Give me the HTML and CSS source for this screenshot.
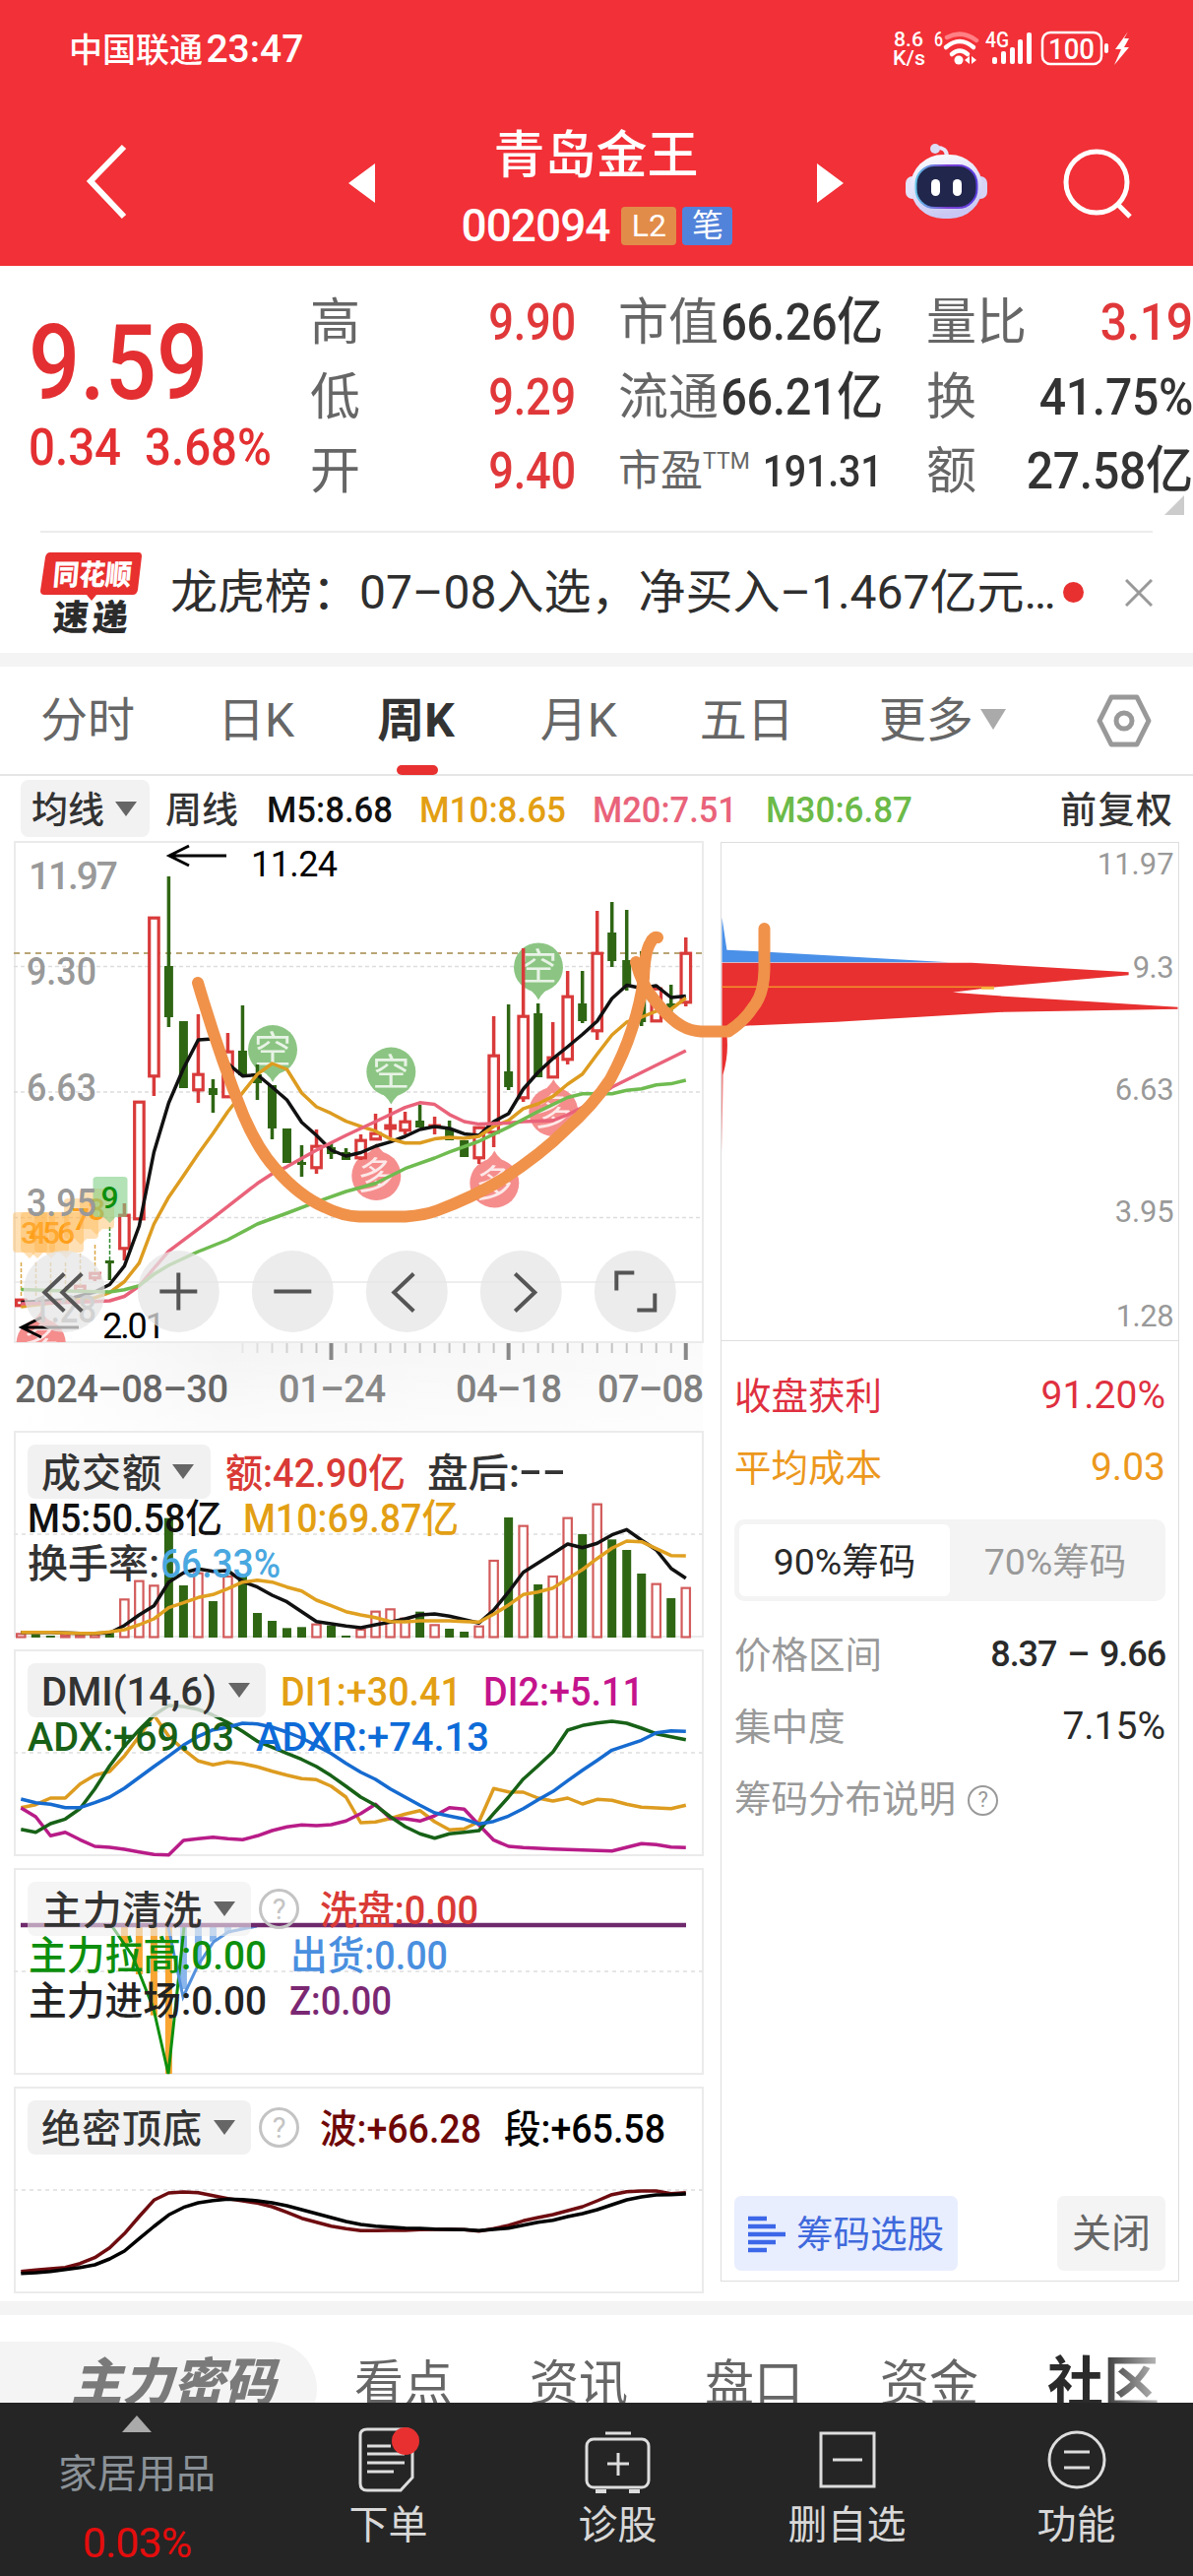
FILE: index.html
```html
<!DOCTYPE html>
<html lang="zh-CN">
<head>
    <meta charset="UTF-8">
    <title>青岛金王 002094</title>
    <link rel="stylesheet" href="styles.css">
</head>
<body>
    <header class="header">
        <div class="status-bar">
            <div class="carrier">中国联通 <span class="clock">23:47</span></div>
            <svg class="status-icons" viewBox="904 28 250 44" width="250" height="44">
                <g class="status-text">
                    <text x="908" y="47" font-size="21" textLength="30" lengthAdjust="spacingAndGlyphs">8.6</text>
                    <text x="907" y="66" font-size="21" textLength="33" lengthAdjust="spacingAndGlyphs">K/s</text>
                    <text x="949" y="47" font-size="20" textLength="9" lengthAdjust="spacingAndGlyphs">6</text>
                    <text x="1001" y="48" font-size="22" textLength="24" lengthAdjust="spacingAndGlyphs">4G</text>
                    <text x="1065" y="60" font-size="30" textLength="47" lengthAdjust="spacingAndGlyphs">100</text>
                </g>
                <g fill="none" stroke="#fff" stroke-width="4.5" stroke-linecap="round">
                    <path d="M962 38q15-8 30 3" stroke="#ff8085"/>
                    <path d="M961 48q14-12 28 0M967 55q8-7 16 0"/>
                </g>
                <circle cx="974" cy="61" r="4.500" fill="#fff"/>
                <path d="M985 57v8l-5-4zM987 57v8l5-4z" fill="#fff"/>
                <g fill="#fff">
                    <rect x="1008" y="58" width="5" height="7" rx="2"/><rect x="1017" y="52" width="5" height="13" rx="2"/>
                    <rect x="1026" y="48" width="5" height="17" rx="2"/><rect x="1034" y="40" width="5" height="25" rx="2"/>
                    <rect x="1043" y="33" width="5" height="32" rx="2"/><rect x="1122" y="44" width="4" height="10" rx="2"/>
                    <path d="M1146 32l-13 18h6l-7 16 15-18h-5l5-9h-5z"/>
                </g>
                <rect x="1059" y="33" width="60" height="32" rx="8" fill="none" stroke="#fff" stroke-width="2.500"/>
            </svg>
        </div>
        <div class="nav-bar">
            <svg class="back" viewBox="0 0 44 78" width="44" height="78"><path d="M40 3L6 38l34 36" fill="none" stroke="#fff" stroke-width="6"/></svg>
            <svg class="prev" viewBox="0 0 27 40" width="27" height="40"><path d="M27 0v40L0 20z" fill="#fff"/></svg>
            <div class="stock">
                <div class="stock-name">青岛金王</div>
                <div class="stock-code"><span>002094</span><i class="tag tag-l2">L2</i><i class="tag tag-pen">笔</i></div>
            </div>
            <svg class="next" viewBox="0 0 27 40" width="27" height="40"><path d="M0 0v40l27-20z" fill="#fff"/></svg>
            <svg class="robot" viewBox="918 144 88 80" width="88" height="80">
                <defs>
                    <linearGradient id="shell" x2="0.300" y2="1"><stop offset="0" stop-color="#fff"/><stop offset="1" stop-color="#c9c8f4"/></linearGradient>
                    <linearGradient id="rim"><stop offset="0" stop-color="#62c4e8"/><stop offset="0.500" stop-color="#7b3fd4"/><stop offset="1" stop-color="#5a3fe0"/></linearGradient>
                </defs>
                <path d="M950 150q12-1 12 9" fill="none" stroke="#e9e6fa" stroke-width="4"/>
                <circle cx="950" cy="151" r="5" fill="#dcdcf5"/>
                <rect x="920" y="179" width="14" height="23" rx="7" fill="#e3e2fa"/>
                <rect x="989" y="179" width="14" height="23" rx="7" fill="#d6d3f6"/>
                <rect x="925" y="157" width="73" height="65" rx="33" fill="url(#shell)"/>
                <rect x="930.500" y="168" width="62" height="43" rx="19" fill="#20264c" stroke="url(#rim)" stroke-width="2"/>
                <rect x="946" y="182" width="9" height="17" rx="4.500" fill="#fff"/>
                <rect x="968" y="182" width="9" height="17" rx="4.500" fill="#fff"/>
            </svg>
            <svg class="search" viewBox="0 0 72 72" width="72" height="72"><g fill="none" stroke="#fff" stroke-width="5"><circle cx="34" cy="34" r="31"/><path d="M55 56l13 13"/></g></svg>
        </div>
    </header>

    <section class="quote">
        <div class="price">
            <div class="price-now"><span class="num">9.59</span></div>
            <div class="price-change"><span class="num">0.34</span><span class="num">3.68%</span></div>
        </div>
        <dl class="stats stats-range">
            <div><dt>高</dt><dd class="up"><span class="num">9.90</span></dd></div>
            <div><dt>低</dt><dd class="up"><span class="num">9.29</span></dd></div>
            <div><dt>开</dt><dd class="up"><span class="num">9.40</span></dd></div>
        </dl>
        <dl class="stats stats-cap">
            <div><dt>市值</dt><dd><span class="num">66.26亿</span></dd></div>
            <div><dt>流通</dt><dd><span class="num">66.21亿</span></dd></div>
            <div class="pe"><dt>市盈<sup>TTM</sup></dt><dd><span class="num">191.31</span></dd></div>
        </dl>
        <dl class="stats stats-vol">
            <div><dt>量比</dt><dd class="up"><span class="num">3.19</span></dd></div>
            <div><dt>换</dt><dd><span class="num">41.75%</span></dd></div>
            <div><dt>额</dt><dd><span class="num">27.58亿</span></dd></div>
        </dl>
        <i class="expand"></i>
    </section>

    <section class="news">
        <svg class="news-logo" viewBox="41 558 104 84" width="104" height="84">
            <path d="M51 559h90q3 0 3 4l-4 34q-1 5-5 5H98l-5 6-5-6H45q-4 0-4-4l5-34q1-5 5-5z" fill="#e8302f"/>
            <text class="logo-text" transform="translate(53 592) skewX(-5)" font-size="29" fill="#fff" textLength="80" lengthAdjust="spacingAndGlyphs">同花顺</text>
            <text class="logo-text" transform="translate(53 638) skewX(-5)" font-size="36" fill="#2b2b2b" textLength="76">速递</text>
        </svg>
        <p class="news-text">龙虎榜：07–08入选，净买入–1.467亿元…</p>
        <i class="news-dot"></i>
        <svg class="close" viewBox="0 0 28 28" width="28" height="28"><path d="M1 1l26 26M27 1L1 27" stroke="#999" stroke-width="3"/></svg>
    </section>

    <nav class="periods">
        <a>分时</a><a>日K</a><a class="active">周K</a><a>月K</a><a>五日</a><a class="more">更多</a>
        <svg class="settings" viewBox="0 0 56 54" width="56" height="54"><g fill="none" stroke="#999" stroke-width="5" stroke-linejoin="round"><path d="M15 3h26l12 24-12 24H15L3 27z"/><circle cx="28" cy="27" r="8"/></g></svg>
    </nav>

    <div class="ma-row">
        <svg viewBox="0 788 1212 67" width="1212" height="67">
            <rect x="21" y="792" width="131" height="58" rx="8" fill="#f2f2f2"/>
            <g font-size="37" class="label">
                <text x="32" y="836" fill="#333" textLength="74">均线</text>
                <path d="M117 814h22l-11 15z" fill="#666"/>
                <text x="168" y="836" fill="#333" textLength="74">周线</text>
                <text x="271" y="835" fill="#111" textLength="128" lengthAdjust="spacingAndGlyphs">M5:8.68</text>
                <text x="426" y="835" fill="#e39f14" textLength="149" lengthAdjust="spacingAndGlyphs">M10:8.65</text>
                <text x="602" y="835" fill="#e9637a" textLength="147" lengthAdjust="spacingAndGlyphs">M20:7.51</text>
                <text x="778" y="835" fill="#6cba48" textLength="149" lengthAdjust="spacingAndGlyphs">M30:6.87</text>
                <text x="1077" y="836" fill="#333" textLength="114">前复权</text>
            </g>
        </svg>
    </div>

    <main class="charts">
        <div class="chart-col">
            <svg id="kline" viewBox="0 854 728 599" width="728" height="599">
                <defs>
                    <linearGradient id="axisShade"><stop offset="0" stop-color="#fff"/><stop offset="0.300" stop-color="#f4f4f4"/><stop offset="1" stop-color="#fafafa"/></linearGradient>
                    <linearGradient id="axisFade" x2="0" y2="1"><stop offset="0" stop-color="#fff" stop-opacity="0"/><stop offset="1" stop-color="#fff" stop-opacity="0.700"/></linearGradient>
                    <clipPath id="klineClip"><rect x="14" y="855" width="701" height="508"/></clipPath>
                </defs>
                <rect x="15" y="1364" width="699" height="90" fill="url(#axisShade)"/>
                <rect x="15" y="1364" width="699" height="90" fill="url(#axisFade)"/>
                <rect x="15" y="855" width="699" height="508" fill="#fff" stroke="#ebebeb" stroke-width="2"/>
                <path d="M14 981.500h700M14 1109h700M14 1236.500h700" stroke="#ddd" stroke-width="1.500" stroke-dasharray="4 3"/>
                <path d="M14 1302h700" stroke="#e8e8e8" stroke-width="1.500"/>
                <path d="M14 968h700" stroke="#b9a575" stroke-width="2" stroke-dasharray="6 5"/>
                <g id="signals" clip-path="url(#klineClip)"></g>
                <g id="candles"></g>
                <g id="tdTags"></g>
                <g id="maLines"></g>
                <g id="ticks"></g>
                <g class="label" font-size="39" fill="#999">
                    <text x="29" y="902.500" textLength="91">11.97</text>
                    <text x="27" y="1000" textLength="71" lengthAdjust="spacingAndGlyphs">9.30</text>
                    <text x="27" y="1118" textLength="71" lengthAdjust="spacingAndGlyphs">6.63</text>
                    <text x="27" y="1235" textLength="71" lengthAdjust="spacingAndGlyphs">3.95</text>
                    <text x="33" y="1343" textLength="65" lengthAdjust="spacingAndGlyphs">1.28</text>
                </g>
                <g font-size="36" class="mark">
                    <text x="255" y="889.500" textLength="88">11.24</text>
                    <text x="104" y="1358.500" textLength="64">2.01</text>
                    <path d="M230 869h-57M192 859l-20 10 20 10" fill="none" stroke="#000" stroke-width="3"/>
                    <path d="M80 1348H23M42 1338l-20 10 20 10" fill="none" stroke="#000" stroke-width="3"/>
                </g>
                <g id="controls"></g>
                <g font-size="38" class="label">
                    <text x="15" y="1423.500" fill="#666" textLength="217">2024–08–30</text>
                    <text x="283" y="1423.500" fill="#888" textLength="109">01–24</text>
                    <text x="463" y="1423.500" fill="#808080" textLength="108">04–18</text>
                    <text x="607" y="1423.500" fill="#808080" textLength="108">07–08</text>
                </g>
            </svg>

            <svg id="volume" viewBox="0 1453 728 222" width="728" height="222">
                <rect x="15" y="1454" width="699" height="208" class="frame"/>
                <path d="M14 1558h700" class="mid"/>
                <g id="volBars"></g><g id="volLines"></g>
                <rect x="28" y="1467" width="186" height="55" rx="8" class="chip"/>
                <path d="M175 1487h22l-11 15z" fill="#666"/>
                <g font-size="40" class="label">
                    <text x="42" y="1510" fill="#333" textLength="122">成交额</text>
                    <text x="229" y="1510" fill="#d93a36" textLength="183" lengthAdjust="spacingAndGlyphs">额:42.90亿</text>
                    <text x="434" y="1510" fill="#333" textLength="94" lengthAdjust="spacingAndGlyphs">盘后:</text>
                    <text x="527" y="1508" fill="#333" textLength="48" lengthAdjust="spacingAndGlyphs">--</text>
                    <text x="28" y="1556" fill="#111" textLength="198" lengthAdjust="spacingAndGlyphs">M5:50.58亿</text>
                    <text x="247" y="1556" fill="#e39f14" textLength="219" lengthAdjust="spacingAndGlyphs">M10:69.87亿</text>
                    <text x="28" y="1602" fill="#333" textLength="134" lengthAdjust="spacingAndGlyphs">换手率:</text>
                    <text x="163" y="1602" fill="#4aa8e0" textLength="122" lengthAdjust="spacingAndGlyphs">66.33%</text>
                </g>
            </svg>

            <svg id="dmi" viewBox="0 1675 728 221" width="728" height="221">
                <rect x="15" y="1676" width="699" height="208" class="frame"/>
                <path d="M14 1780h700" class="mid"/>
                <g id="dmiLines"></g>
                <rect x="28" y="1689" width="242" height="55" rx="8" class="chip"/>
                <path d="M232 1709h22l-11 15z" fill="#666"/>
                <g font-size="40" class="label">
                    <text x="42" y="1732" fill="#333" textLength="178" lengthAdjust="spacingAndGlyphs">DMI(14,6)</text>
                    <text x="285" y="1732" fill="#e39f14" textLength="184" lengthAdjust="spacingAndGlyphs">DI1:+30.41</text>
                    <text x="491" y="1732" fill="#c4148c" textLength="163" lengthAdjust="spacingAndGlyphs">DI2:+5.11</text>
                    <text x="28" y="1778" fill="#176117" textLength="210" lengthAdjust="spacingAndGlyphs">ADX:+69.03</text>
                    <text x="260" y="1778" fill="#0d6bd8" textLength="237" lengthAdjust="spacingAndGlyphs">ADXR:+74.13</text>
                </g>
            </svg>

            <svg id="washing" viewBox="0 1896 728 223" width="728" height="223">
                <rect x="15" y="1898" width="699" height="208" class="frame"/>
                <path d="M14 2002h700" class="mid"/>
                <g id="washBars"></g>
                <path d="M21 1955h92l22 32 21 53 15 66 16-149" fill="none" stroke="#0d8f0d" stroke-width="3"/>
                <path d="M171 1957l15 71 15-32 16-24 15-10 29-6" fill="none" stroke="#5592dd" stroke-width="3"/>
                <path d="M21 1955h676" stroke="#6f2a6c" stroke-width="4.500"/>
                <rect x="28" y="1911" width="227" height="55" rx="8" class="chip chip-thin"/>
                <path d="M217 1931h22l-11 15z" fill="#666"/>
                <circle cx="283.500" cy="1938.500" r="19" class="help"/>
                <text x="283.500" y="1949" font-size="29" class="help-mark">?</text>
                <g font-size="40" class="label">
                    <text x="43" y="1954" fill="#333" textLength="162">主力清洗</text>
                    <text x="325" y="1954" fill="#d93a36" textLength="161" lengthAdjust="spacingAndGlyphs">洗盘:0.00</text>
                    <text x="29" y="2000" fill="#0d8f0d" textLength="242" lengthAdjust="spacingAndGlyphs">主力拉高:0.00</text>
                    <text x="295" y="2000" fill="#4a8fdf" textLength="160" lengthAdjust="spacingAndGlyphs">出货:0.00</text>
                    <text x="29" y="2046" fill="#222" textLength="242" lengthAdjust="spacingAndGlyphs">主力进场:0.00</text>
                    <text x="294" y="2046" fill="#7b2873" textLength="104" lengthAdjust="spacingAndGlyphs">Z:0.00</text>
                </g>
            </svg>

            <svg id="topBottom" viewBox="0 2119 728 218" width="728" height="218">
                <rect x="15" y="2120" width="699" height="208" class="frame"/>
                <path d="M14 2224h700" class="mid"/>
                <g id="tbLines"></g>
                <rect x="28" y="2133" width="227" height="55" rx="8" class="chip"/>
                <path d="M217 2153h22l-11 15z" fill="#666"/>
                <circle cx="283.500" cy="2160.500" r="19" class="help"/>
                <text x="283.500" y="2171" font-size="29" class="help-mark">?</text>
                <g font-size="40" class="label">
                    <text x="42" y="2176" fill="#333" textLength="163">绝密顶底</text>
                    <text x="325" y="2176" fill="#6e0808" textLength="164" lengthAdjust="spacingAndGlyphs">波:+66.28</text>
                    <text x="512" y="2176" fill="#000" textLength="164" lengthAdjust="spacingAndGlyphs">段:+65.58</text>
                </g>
            </svg>
        </div>

        <aside class="chips">
            <svg class="chips-chart" viewBox="733 856 464 506" width="464" height="506">
                <path d="M733 932l5 33 22 1 204 11.500H733z" fill="#4a90e8"/>
                <path d="M733 978h254l160 9.500v3L1008 1003l-40 5 52 4 177 11v2l-177 3-170 10-93 4-19 10q2 20-4 40l-1 80z" fill="#e83030"/>
                <path d="M733 1002.500h264" stroke="#f3922a" stroke-width="1.500"/>
                <path d="M997 1003.500h13" stroke="#f5b13a" stroke-width="3"/>
                <g class="axis" font-size="31">
                    <text x="1193" y="888" textLength="78">11.97</text>
                    <text x="1193" y="993" textLength="42">9.3</text>
                    <text x="1193" y="1117.500" textLength="60">6.63</text>
                    <text x="1193" y="1241.500" textLength="60">3.95</text>
                    <text x="1193" y="1347.500" textLength="59">1.28</text>
                </g>
            </svg>
            <div class="chips-info">
                <div class="info-row profit"><span>收盘获利</span><b>91.20%</b></div>
                <div class="info-row cost"><span>平均成本</span><b>9.03</b></div>
                <div class="segment"><span class="on">90%筹码</span><span>70%筹码</span></div>
                <div class="info-row"><span>价格区间</span><b class="range">8.37 – 9.66</b></div>
                <div class="info-row"><span>集中度</span><b>7.15%</b></div>
                <div class="info-row"><span>筹码分布说明 <i class="q">?</i></span></div>
                <div class="chips-actions">
                    <span class="pick"><svg viewBox="0 0 38 38" width="38" height="38"><path d="M0 3h19M0 11h28M0 19h38M0 27h28M0 35h19" stroke="#3c67e8" stroke-width="4.500"/></svg>筹码选股</span>
                    <span class="shut">关闭</span>
                </div>
            </div>
        </aside>

        <svg class="drawing" viewBox="190 930 600 320" width="600" height="320">
            <path d="M201 998C214 1042 226 1080 247 1132C258 1158 268 1174 280 1187Q303 1214 330 1226Q348 1235 365 1235.500H412Q432 1234 445 1229Q480 1216 510 1198Q550 1172 575 1147Q603 1122 620 1096Q634 1070 642 1045Q651 1018 654 993Q655 966 661 957Q664 951 668 952"/>
            <path d="M646 977Q652 1000 663 1013Q680 1035 693 1042Q702 1047 712 1047.500H740Q756 1037 765 1023Q776 1010 776.500 985V943"/>
        </svg>
    </main>

    <nav class="sections">
        <a class="pill">主力密码</a><a>看点</a><a>资讯</a><a>盘口</a><a>资金</a><a class="current">社区</a>
    </nav>

    <footer class="toolbar">
        <div class="sector"><i class="caret"></i><span class="sector-name">家居用品</span><span class="sector-rate">0.03%</span></div>
        <div class="tool">
            <svg viewBox="0 0 64 68" width="64" height="68"><g fill="none" stroke="#ddd" stroke-width="3"><path d="M10 3h40q6 0 6 6v43L44 65H10q-7 0-7-7V9q0-6 7-6z"/><path d="M10 20h24M10 28h38M10 37h38M10 46h27"/></g><circle cx="49" cy="15" r="14" fill="#e83030"/></svg>
            <span>下单</span>
        </div>
        <div class="tool">
            <svg viewBox="0 0 68 68" width="68" height="68"><g fill="none" stroke="#ddd" stroke-width="3"><rect x="2" y="13" width="63" height="49" rx="7"/><path d="M21 7h26M23 38h22M34 27v23"/><path d="M11 66h11M45 66h11" stroke-width="4"/></g></svg>
            <span>诊股</span>
        </div>
        <div class="tool">
            <svg viewBox="0 0 60 68" width="60" height="68"><path d="M3 7h54v54H3zM15 34h30" fill="none" stroke="#ddd" stroke-width="3"/></svg>
            <span>删自选</span>
        </div>
        <div class="tool">
            <svg viewBox="0 0 60 68" width="60" height="68"><g fill="none" stroke="#ddd" stroke-width="3"><circle cx="30" cy="34" r="28"/><path d="M17 26h26M17 42h26"/></g></svg>
            <span>功能</span>
        </div>
    </footer>
    <script src="charts.js"></script>
</body>
</html>
```
FILE: styles.css
```css
* {
    box-sizing: border-box;
}

body {
    margin: 0;
    width: 1212px;
    height: 2616px;
    overflow: hidden;
    background-color: #fff;
    color: #333;
    font-family: Roboto, "Noto Sans CJK SC", sans-serif;
}

svg {
    display: block;
    flex: none;
}

i {
    font-style: normal;
}

.num {
    display: inline-block;
    transform: scaleX(0.87);
    transform-origin: right;
}

/* header */
.header {
    height: 270px;
    background-color: #f23037;
    color: #fff;
}

.status-bar {
    display: flex;
    justify-content: space-between;
    align-items: center;
    height: 100px;
    padding: 0 58px 0 70px;
}

.carrier {
    font-size: 34px;
    font-weight: 500;
    line-height: 40px;
    white-space: nowrap;
}

.clock {
    font-size: 39px;
    margin-left: -5px;
}

.status-text {
    fill: #fff;
    font-weight: 500;
}

.nav-bar {
    display: flex;
    height: 170px;
    padding-left: 86px;
}

.back {
    margin-top: 46px;
}

.prev {
    margin: 66px 0 0 224px;
}

.next {
    margin-top: 66px;
}

.stock {
    width: 449px;
    text-align: center;
}

.stock-name {
    font-size: 52px;
    font-weight: 500;
    line-height: 70px;
    margin-top: 24px;
}

.stock-code {
    display: flex;
    justify-content: center;
    align-items: center;
    gap: 6px;
    font-size: 46px;
    font-weight: 500;
    line-height: 70px;
    padding-left: 2px;
}

.stock-code span {
    letter-spacing: -1px;
    margin-right: 6px;
}

.tag {
    height: 39px;
    line-height: 38px;
    border-radius: 4px;
    text-align: center;
    font-size: 32px;
    font-weight: 400;
}

.tag-l2 {
    width: 56px;
    background-color: #e28c49;
}

.tag-pen {
    width: 51px;
    background-color: #5283da;
}

.robot {
    margin: 44px 0 0 61px;
}

.search {
    margin: 51px 0 0 74px;
}

/* quote */
.quote {
    position: relative;
    display: flex;
    height: 269px;
    padding-top: 20px;
}

.price {
    width: 315px;
    padding-left: 29px;
    color: #e32f31;
    white-space: nowrap;
}

.price .num {
    transform-origin: left;
}

.price-now {
    height: 134px;
    line-height: 160px;
    font-size: 105px;
    font-weight: 500;
}

.price-now .num {
    transform: scaleX(0.875);
}

.price-change {
    display: flex;
    gap: 17px;
    font-size: 51px;
    font-weight: 500;
    line-height: 62px;
}

.price-change .num {
    transform: scaleX(0.93);
}

.stats {
    margin: 0;
}

.stats div {
    display: flex;
    justify-content: space-between;
    align-items: center;
    height: 75.500px;
    line-height: 75px;
    font-size: 51px;
    white-space: nowrap;
}

.stats dt {
    color: #666;
}

.stats dd {
    margin: 0;
    font-size: 52px;
    font-weight: 500;
    letter-spacing: -0.3px;
}

.stats .up {
    color: #e0383a;
}

.stats-range {
    width: 270px;
}

.stats-cap {
    width: 270px;
    margin-left: 43px;
}

.stats-cap div {
    padding-right: 1px;
}

/* the squeezed number may reach over its own unscaled box */
.stats-cap dd {
    margin-left: -30px;
}

.stats-cap .num {
    transform: scaleX(0.9);
}

.stats-vol {
    width: 271px;
    margin-left: 43px;
}

.stats-vol .num {
    transform: scaleX(0.925);
}

.stats .pe dt {
    font-size: 43px;
}

.stats .pe dd {
    font-size: 45px;
}

.stats .pe .num {
    transform: scaleX(0.88);
}

.pe sup {
    font-size: 23px;
    vertical-align: 17px;
    line-height: 0;
}

.expand {
    position: absolute;
    right: 9px;
    top: 233px;
    border-left: 20px solid transparent;
    border-bottom: 20px solid #ccc;
}

/* news */
.news {
    display: flex;
    align-items: center;
    height: 124px;
    margin: 0 41px;
    border-top: 2px solid #ececec;
}

.logo-text {
    font-weight: 900;
}

.news-text {
    width: 893px;
    margin: 0 0 0 28px;
    font-size: 48px;
    line-height: 60px;
    white-space: nowrap;
    color: #2e2e2e;
}

.news-dot {
    width: 21px;
    height: 21px;
    margin-left: 14px;
    margin-top: -2px;
    border-radius: 50%;
    background-color: #e83030;
}

.close {
    margin-left: auto;
}

/* period tabs */
.periods {
    display: flex;
    align-items: center;
    height: 125px;
    padding-left: 41px;
    border-top: 14px solid #f4f4f4;
    border-bottom: 2px solid #e5e5e5;
    font-size: 48px;
    color: #666;
}

.periods a {
    position: relative;
    line-height: 110px;
    margin-right: 84px;
    white-space: nowrap;
}

.periods .active {
    color: #333;
    font-weight: 700;
    margin-right: 87px;
}

.periods .active::after {
    content: "";
    position: absolute;
    left: 20px;
    bottom: 0;
    width: 42px;
    height: 10px;
    border-radius: 5px;
    background-color: #e83030;
}

.periods .more {
    margin-left: 2px;
    margin-right: 0;
}

.periods .more::after {
    content: "";
    display: inline-block;
    margin-left: 7px;
    vertical-align: 7px;
    border: 13px solid transparent;
    border-top: 21px solid #aaa;
    border-bottom: 0;
}

.settings {
    margin-left: auto;
    margin-right: 42px;
}

/* charts */
.charts {
    position: relative;
    display: flex;
    height: 1483px;
    margin-top: -1px;
}

.label {
    font-weight: 500;
}

.axis {
    fill: #999;
    text-anchor: end;
}

.mark {
    fill: #000;
}

.frame {
    fill: #fff;
    stroke: #ebebeb;
    stroke-width: 2;
}

.mid {
    stroke: #e6e6e6;
    stroke-width: 2;
    stroke-dasharray: 4 4;
}

.chip {
    fill: rgba(238, 238, 238, 0.8);
}

.chip-thin {
    fill: rgba(238, 238, 238, 0.6);
}

.help {
    fill: none;
    stroke: #c4c4c4;
    stroke-width: 3;
}

.help-mark {
    fill: #c4c4c4;
    text-anchor: middle;
}

.line {
    fill: none;
    stroke-width: 3.5;
    stroke-linejoin: round;
}

.signal {
    fill: #fff;
    font-size: 38px;
    text-anchor: middle;
    opacity: 0.8;
}

.drawing {
    position: absolute;
    left: 190px;
    top: 76px;
    fill: none;
    stroke: #f0924a;
    stroke-width: 12;
    stroke-linecap: round;
    stroke-linejoin: round;
}

.chips {
    width: 466px;
    height: 1462px;
    margin: 1px 0 0 4px;
    border: 1px solid #dedede;
}

.chips-chart {
    border-bottom: 1px solid #dedede;
}

.chips-info {
    padding: 19px 13px 0;
    font-size: 37.500px;
    color: #999;
}

.info-row {
    display: flex;
    justify-content: space-between;
    align-items: center;
    height: 73px;
    line-height: 73px;
}

.info-row span, .pick, .shut {
    padding-top: 2px;
}

.info-row b {
    font-weight: 400;
    color: #2a2a2a;
    font-size: 39px;
}

.info-row .range {
    font-weight: 500;
    font-size: 36px;
    word-spacing: 3px;
    letter-spacing: -1.1px;
}

.profit, .info-row.profit b {
    color: #df3040;
}

.cost, .info-row.cost b {
    color: #ec981d;
}

.segment {
    display: flex;
    height: 83px;
    margin: 16px 0 18px;
    padding: 5px;
    border-radius: 10px;
    background-color: #f4f4f4;
}

.segment span {
    flex: 1;
    line-height: 76px;
    text-align: center;
    border-radius: 6px;
}

.segment .on {
    background-color: #fff;
    color: #2a2a2a;
}

.q {
    display: inline-block;
    width: 31px;
    height: 31px;
    margin-left: 3px;
    border: 2.5px solid #999;
    border-radius: 50%;
    font-size: 22px;
    line-height: 26px;
    text-align: center;
    vertical-align: 5px;
}

.chips-actions {
    display: flex;
    justify-content: space-between;
    margin-top: 367px;
}

.pick, .shut {
    display: flex;
    align-items: center;
    justify-content: center;
    height: 76px;
    line-height: 74px;
    border-radius: 7px;
}

.pick {
    width: 227px;
    gap: 11px;
    background-color: #e8eefe;
    color: #3f69dc;
}

.shut {
    width: 110px;
    font-size: 40px;
    background-color: #f4f4f4;
    color: #666;
}

/* section tabs */
.sections {
    display: flex;
    height: 103px;
    padding-top: 27px;
    border-top: 14px solid #f4f4f4;
    overflow: hidden;
    font-size: 50px;
    line-height: 86px;
    color: #666;
}

.sections a {
    flex: none;
    margin-right: 78px;
}

.sections .pill {
    width: 322px;
    height: 96px;
    margin-right: 38px;
    padding-left: 72px;
    border-radius: 0 48px 48px 0;
    background-color: #f4f4f4;
    color: #7a7a7a;
    font-size: 52px;
    line-height: 86px;
    font-weight: 900;
    font-style: italic;
}

.sections .current {
    margin: 0 0 0 -8px;
    font-size: 57px;
    font-weight: 700;
    background: linear-gradient(90deg, #2b2b2b 45%, #bbb);
    -webkit-background-clip: text;
    color: transparent;
}

/* toolbar */
.toolbar {
    position: relative;
    display: flex;
    height: 176px;
    background-color: #252525;
    color: #d8d8d8;
    font-size: 40px;
}

.sector {
    display: flex;
    flex-direction: column;
    align-items: center;
    width: 278px;
    padding-top: 13px;
}

.caret {
    border: 15px solid transparent;
    border-bottom: 17px solid #aaa;
    border-top: 0;
}

.sector-name {
    margin-top: 12px;
    line-height: 62px;
    color: #8b9298;
}

.sector-rate {
    margin-top: 6px;
    line-height: 64px;
    font-size: 43px;
    letter-spacing: -1px;
    color: #e40d0d;
}

.tool {
    display: flex;
    flex-direction: column;
    align-items: center;
    width: 233px;
    padding-top: 24px;
}

.tool span {
    line-height: 66px;
}
```
FILE: charts.js
```js
const X0 = 21.3, STEP = 15.01;
const RED = '#d93a3a', GREEN = '#2f6614';
const $ = id => document.getElementById(id);
const xAt = i => X0 + STEP * i;

// pts: list of y values, or [index, y] pairs
function line(pts, color, toY = v => v) {
    const d = pts.map((p, i) => Array.isArray(p)
        ? xAt(p[0]).toFixed(1) + ',' + toY(p[1])
        : xAt(i).toFixed(1) + ',' + toY(p).toFixed(1)).join(' ');
    return `<polyline class="line" points="${d}" stroke="${color}"/>`;
}

// index, up/down, high, open/close top, open/close bottom, low
const candles = [
    [0, 1, 1319, 1319, 1327, 1327], [4, 1, 1305, 1305, 1312, 1312], [5, 1, 1292, 1292, 1299, 1301],
    [6, 0, 1280, 1280, 1283, 1300], [7, 1, 1222, 1233, 1269, 1280], [8, 1, 1118, 1118, 1239, 1239],
    [9, 1, 931, 931, 1094, 1113], [10, 0, 890, 981, 1033, 1043], [11, 0, 1037, 1037, 1105, 1105],
    [12, 1, 1030, 1090, 1108, 1120], [13, 0, 1096, 1105, 1112, 1130], [14, 1, 1049, 1067, 1115, 1115],
    [15, 0, 1021, 1067, 1092, 1092], [16, 0, 1081, 1091, 1100, 1117], [17, 0, 1102, 1102, 1146, 1157],
    [18, 0, 1146, 1146, 1181, 1181], [19, 0, 1163, 1180, 1183, 1195], [20, 1, 1147, 1163, 1187, 1192],
    [21, 0, 1160, 1165, 1172, 1177], [22, 0, 1166, 1170, 1178, 1178], [23, 1, 1152, 1157, 1177, 1178],
    [24, 1, 1131, 1150, 1158, 1158], [25, 1, 1125, 1142, 1147, 1155], [26, 1, 1129, 1138, 1149, 1152],
    [27, 0, 1122, 1138, 1145, 1145], [28, 1, 1134, 1142, 1145, 1152], [29, 0, 1138, 1146, 1158, 1158],
    [30, 0, 1158, 1158, 1175, 1175], [31, 1, 1144, 1144, 1177, 1182], [32, 1, 1032, 1071, 1151, 1165],
    [33, 0, 1020, 1088, 1104, 1107], [34, 1, 963, 1031, 1116, 1119], [35, 0, 1019, 1029, 1094, 1094],
    [36, 1, 1038, 1073, 1095, 1095], [37, 1, 986, 1011, 1077, 1081], [38, 0, 986, 1019, 1037, 1039],
    [39, 1, 925, 967, 1048, 1056], [40, 0, 916, 947, 976, 982], [41, 0, 924, 975, 1002, 1006],
    [42, 0, 966, 989, 1038, 1042], [43, 1, 1000, 1003, 1038, 1038], [44, 0, 1000, 1019, 1023, 1027],
    [45, 1, 952, 967, 1019, 1022]
];

$('candles').innerHTML = candles.map(([i, up, hi, t, b, lo]) => {
    const x = xAt(i), c = up ? RED : GREEN;
    const wick = `<path d="M${x} ${hi}V${t}M${x} ${b}V${lo}" stroke="${c}" stroke-width="3.500"/>`;
    const body = up
        ? `<rect x="${x - 4.7}" y="${t + 1.2}" width="9.500" height="${b - t - 2.4}" fill="#fff" stroke="${c}" stroke-width="3.200"/>`
        : `<rect x="${x - 4.5}" y="${t}" width="9" height="${b - t}" fill="${c}"/>`;
    return wick + body;
}).join('');

$('maLines').innerHTML =
    line([[0,1322.5],[3,1320],[5,1312],[6,1304.5],[7,1285.7],[8,1245],[9,1170],[10,1120],[11,1085],[12,1056],[13,1055],[14,1080],[15,1092.7],[16,1091.5],[17,1104],[18,1117],[19,1139.7],[20,1153],[21,1168],[22,1174],[23,1170.5],[24,1164],[25,1159.6],[26,1154],[27,1147],[28,1144],[29,1146],[30,1151.4],[31,1153],[32,1139],[33,1131],[34,1106],[35,1089],[36,1075],[37,1063],[38,1050.5],[39,1037],[40,1014],[41,1000.5],[42,1003.5],[43,1001],[44,1013],[45,1011.4]], '#111') +
    line([[0,1327],[5,1318],[6,1312.7],[7,1301.5],[8,1282.7],[9,1243],[10,1215.7],[11,1194],[12,1171.7],[13,1151],[14,1129],[15,1109.6],[16,1090.8],[17,1080],[18,1086],[19,1110],[20,1124],[21,1130.7],[22,1138.6],[23,1143.8],[24,1148.7],[25,1156.6],[26,1160.8],[27,1160.8],[28,1156.6],[29,1155],[30,1156],[31,1154],[32,1144],[33,1137.8],[34,1125.8],[35,1121],[36,1113.4],[37,1101],[38,1090.8],[39,1070.5],[40,1051],[41,1038],[42,1033],[43,1026.8],[44,1025],[45,1013.3]], '#dd9c20') +
    line([[0,1324],[5,1321.8],[6,1321],[7,1316.5],[8,1306],[9,1288],[10,1270.6],[13,1236.8],[16,1201.8],[17,1192],[18,1184.8],[20,1168],[22,1153],[24,1139],[26,1124.6],[27,1119.8],[28,1121.6],[29,1131.8],[30,1139],[31,1141.6],[33,1140.4],[34,1139],[36,1138],[37,1132],[38,1124.6],[40,1104],[43,1081.8],[45,1067]], '#e9637a') +
    line([[0,1309.4],[3,1311],[6,1312],[7,1309.8],[8,1305.6],[9,1294],[10,1285],[12,1271],[14,1259],[16,1243],[18,1232],[20,1220.6],[22,1210],[24,1201.8],[26,1186.7],[28,1176],[29,1169.8],[31,1159],[33,1144.6],[35,1128.8],[37,1114.5],[38,1110.7],[40,1110.7],[41,1107.3],[42,1105.8],[43,1101.7],[44,1100.6],[45,1097]], '#6fbb50');

// short (空) and long (多) signal balloons
const signals = [
    [277, 1066, '空'], [397.3, 1088.5, '空'], [547, 982.4, '空'],
    [382.3, 1194, '多'], [502.3, 1201.5, '多'], [562.3, 1129, '多'], [41.7, 1364, '多']
];
$('signals').innerHTML = signals.map(([x, y, t]) => {
    const down = t === '空', s = down ? 1 : -1;
    return `<g fill="${down ? '#8cc583' : '#f58d8d'}"><circle cx="${x}" cy="${y}" r="25"/>` +
        `<path d="M${x - 19} ${y + s * 16}Q${x - 4} ${y + s * 24} ${x} ${y + s * 33}Q${x + 4} ${y + s * 24} ${x + 19} ${y + s * 16}z"/></g>` +
        `<text class="signal" x="${x}" y="${y + 13}">${t}</text>`;
}).join('');

// sequence count tags
const tags = [[30, 1263, '3', 1], [38, 1263, '4', 1], [52, 1263, '5', 1], [67, 1263, '6', 1], [82, 1249, '7', 1], [98, 1239, '8', 1], [111.5, 1227, '9', 0]];
$('tdTags').innerHTML = [21, 36, 51, 66, 81, 96, 111].map((x, i) =>
    `<path d="M${x + 0.5} ${i === 6 ? 1246 : 1282 - Math.max(0, i - 3) * 9}V${1318 - Math.max(0, i - 3) * 12}" stroke="${i === 6 ? '#2f8a2f' : '#d9a848'}" stroke-width="1.500" stroke-dasharray="4 2"/>`
).join('') + tags.map(([x, y, n, o]) =>
    `<path d="M${x - 17} ${y - 29}q0-3 4-3h27q4 0 4 3v34q0 4-4 4h-8l-6 6-6-6h-7q-4 0-4-4z" fill="${o ? '#ffb44c' : '#7fce85'}" fill-opacity="${o ? 0.42 : 0.6}"/>` +
    `<text x="${x}" y="${y}" font-size="32" font-weight="500" text-anchor="middle" fill="${o ? '#ff9f1a' : '#0d8f0d'}">${n}</text>`
).join('');

let ticks = '';
for (let i = 15; i < 46; i++) {
    const big = i === 21 || i === 33 || i === 45;
    ticks += `<path d="M${xAt(i)} 1364v${big ? 17 : 10}" stroke="${big ? '#888' : '#c4c4c4'}" stroke-width="${big ? 4 : 2}" opacity="${Math.min(1, (i - 13) / 7)}"/>`;
}
$('ticks').innerHTML = ticks;

// round zoom / pan buttons on the bottom of the chart
const icons = ['M0-18l-20 19 20 19M18-18l-20 19 20 19', 'M-19 0h38M0-19v38', 'M-19 0h38', 'M7-18l-20 19 20 19', 'M-6-18l20 19-20 19', 'M-1-19h-18v18M2 19h18V2'];
$('controls').innerHTML = icons.map((d, i) =>
    `<g transform="translate(${65.3 + 116 * i} 1311.500)"><circle r="41.500" fill="#e6e6e6" fill-opacity="0.740"/><path d="${d}" fill="none" stroke="#555" stroke-width="4"/></g>`
).join('');

// the sub charts share the same scale, each with its own origin
const sub = top => v => top + v / 3;

const volume = [655,-658,-663,658,658,657,-648,550,494,508,-305,-510,470,-558,480,-478,-594,-618,-640,-637,626,-632,-663,642,587,580,608,-590,628,-642,-651,632,432,-303,326,-507,480,302,-354,260,-370,-402,-474,503,-549,515];
$('volBars').innerHTML = volume.map((v, i) => {
    const y = 1440 + Math.abs(v) / 3, x = xAt(i);
    return v > 0
        ? `<rect x="${x - 4.2}" y="${y + 1}" width="8.400" height="${Math.max(1, 1661.5 - y)}" fill="#fff" stroke="#d35b5b" stroke-width="2.200"/>`
        : `<rect x="${x - 4.5}" y="${y}" width="9" height="${1663 - y}" fill="${GREEN}"/>`;
}).join('');
$('volLines').innerHTML =
    line([653,653,653,655,656,656,655,632,600,572,500,472,460,467,465,498,515,540,560,590,620,627,634,639,630,622,612,600,597,604,614,625,585,530,470,442,413,384,395,382,356,340,372,402,458,488], '#111', sub(1440)) +
    line([653,653,653,655,656,656,652,645,630,612,578,563,547,538,520,500,494,500,515,527,555,572,590,600,608,620,621,618,618,618,620,622,598,570,538,530,518,490,462,428,397,375,377,398,419,420], '#e0a020', sub(1440));

$('dmiLines').innerHTML =
    line([1187,1178,1158,1158,1115,1088,1077,1030,970,905,970,1010,1045,1057,1048,1053,1063,1076,1088,1099,1102,1122,1155,1233,1231,1220,1207,1196,1230,1255,1252,1230,1129,1139,1140,1158,1167,1158,1176,1162,1165,1177,1186,1188,1190,1180], '#dd9c20', sub(1440)) +
    line([1188,1215,1273,1262,1285,1305,1308,1314,1322,1330,1331,1287,1282,1277,1282,1285,1273,1257,1246,1240,1242,1239,1228,1205,1177,1220,1221,1228,1212,1187,1192,1240,1286,1305,1309,1311,1313,1315,1316,1318,1319,1308,1297,1300,1307,1309], '#b81c88', sub(1440)) +
    line([1253,1262,1236,1222,1190,1130,1060,1000,950,905,876,879,888,905,928,955,985,1003,1022,1040,1062,1090,1122,1155,1180,1215,1245,1267,1280,1267,1262,1257,1205,1155,1100,1060,1018,951,937,929,924,930,945,962,971,980], '#176117', sub(1440)) +
    line([1161,1172,1177,1187,1187,1172,1155,1128,1095,1062,1030,997,970,950,942,930,932,942,957,975,998,1022,1052,1079,1101,1130,1155,1180,1203,1213,1222,1237,1229,1213,1190,1163,1138,1105,1073,1043,1012,997,982,959,953,955], '#166bd0', sub(1440));

$('washBars').innerHTML = [[7, 290], [8, 375], [9, 500], [10, 678], [11, 420], [12, 350], [13, 275], [14, 250], [15, 237]].map(([i, v]) =>
    `<rect x="${xAt(i) - 3.5}" y="1957" width="7" height="${1880 + v / 3 - 1957}" fill="${i < 11 ? '#f8a532' : '#8ab6ec'}"/>`
).join('');

$('tbLines').innerHTML =
    line([1280,1276,1272,1268,1256,1238,1208,1165,1113,1063,1041,1038,1040,1049,1058,1065,1072,1083,1100,1118,1130,1142,1150,1156,1156,1155,1155,1153,1152,1152,1153,1157,1150,1140,1126,1116,1107,1095,1083,1065,1046,1037,1035,1035,1043,1040], '#6e0c10', sub(1880)) +
    line([1286,1284,1280,1274,1268,1260,1242,1218,1180,1143,1108,1085,1071,1064,1060,1061,1065,1071,1080,1092,1104,1116,1128,1137,1142,1145,1148,1149,1151,1152,1153,1156,1152,1148,1139,1130,1124,1113,1104,1092,1077,1062,1053,1047,1046,1044], '#000', sub(1880));
```
